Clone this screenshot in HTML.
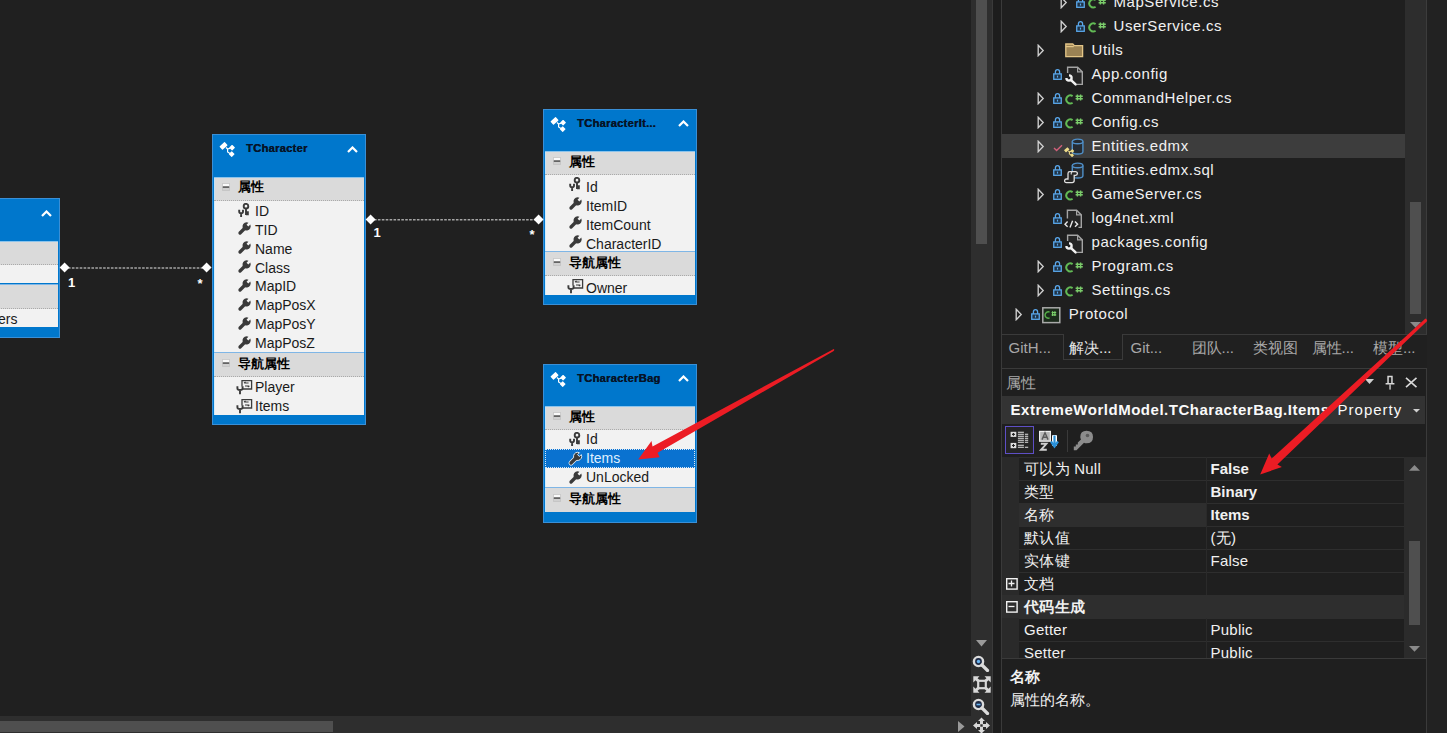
<!DOCTYPE html><html><head><meta charset="utf-8"><style>
*{margin:0;padding:0;box-sizing:border-box}
html,body{width:1447px;height:733px;overflow:hidden;background:#202020;font-family:"Liberation Sans", sans-serif}
.abs{position:absolute}
.ent{position:absolute;background:#0077cc;border:1px solid #3a8fd6;overflow:hidden}
.etitle{position:absolute;font-weight:bold;font-size:11.2px;color:#061428;white-space:nowrap;letter-spacing:0.25px;margin-top:1px;text-shadow:0.35px 0 0 #061428}
.sec{position:absolute;left:1px;height:24px;background:#dadada;border-bottom:1px dotted #aaaaaa;border-top:1px solid #8cc4ec;box-shadow:inset 1px 0 0 #c4e2f6}
.sec.empty{border-bottom:none}
.sec.nav{border-top:1px solid #7fb6e6}
.sect{position:absolute;top:1px;font-size:13px;line-height:22px;color:#000;font-weight:bold;white-space:nowrap;margin-left:1.5px}
.rows{position:absolute;left:1px;background:#f2f2f2;box-shadow:inset 1px 0 0 #d4ecfa}
.rowt{position:absolute;left:41px;margin-top:1.3px;font-size:14px;line-height:18.9px;color:#1a1a1a;white-space:nowrap}
.selrow{position:absolute;left:0;right:0;background:#0a72d0;outline:1px dotted #d8e8f8;outline-offset:-1px}
.selt{color:#dff0ff}
.dia{position:absolute;width:7.2px;height:7.2px;background:#fff;transform:rotate(45deg)}
.card{position:absolute;font-size:13px;font-weight:bold;color:#fff}
.tree{position:absolute;font-size:15px;letter-spacing:0.55px;color:#f1f1f1;white-space:nowrap;line-height:24px}
.tab{position:absolute;top:337.5px;font-size:15px;line-height:20px;color:#a8a8a8;white-space:nowrap}
.pg{position:absolute;font-size:15px;line-height:23px;color:#f1f1f1;white-space:nowrap;letter-spacing:0.25px}
</style></head><body><div class="abs" style="left:0;top:0;width:971px;height:716px;background:#202020"></div><svg class="abs" style="left:0;top:0" width="971" height="716"><path d="M68 268 H204 M374 219.8 H536" stroke="#a4a4a4" stroke-width="1.4" stroke-dasharray="2.6 1.3"/></svg><div class="ent" style="left:-94px;top:198px;width:154px;height:139.6px"><svg style="position:absolute;left:5.8px;top:6px" width="17" height="17" viewBox="0 0 17 17">
<g fill="#fff"><rect x="1" y="2.6" width="7" height="4.6" rx="0.6" transform="rotate(-42 4.5 4.9)"/>
<rect x="11" y="4.6" width="4.2" height="4.2" rx="0.5" transform="rotate(45 13.1 6.7)"/>
<rect x="10.6" y="11" width="4.2" height="4.2" rx="0.5" transform="rotate(45 12.7 13.1)"/></g>
<path d="M7 6.5 L8.6 8 L8.6 11 L11 12.6 M8.6 8 L11.4 7.2" stroke="#fff" stroke-width="1.2" fill="none"/></svg><div class="etitle" style="left:33px;top:6px">TUser</div><svg style="position:absolute;left:133.5px;top:10.5px" width="11" height="7" viewBox="0 0 11 7"><path d="M1 6 L5.5 1.5 L10 6" stroke="#fff" stroke-width="2.2" fill="none"/></svg><div class="sec" style="top:41.6px;width:150px"><svg style="position:absolute;left:8px;top:5.2px" width="8" height="8" viewBox="0 0 8 8"><rect x="0" y="0" width="8" height="8" rx="0.8" fill="#c4c4c4"/><rect x="0.8" y="0.8" width="6.4" height="3" fill="#fafafa"/><rect x="0.8" y="4.6" width="6.4" height="2.6" fill="#d0d0d0"/><rect x="0.8" y="3.4" width="6.4" height="1.3" fill="#3a3a3a"/></svg><span class="sect" style="left:22px;top:-1.3px">属性</span></div><div class="rows" style="top:65.6px;width:150px;height:18.9px"><svg style="position:absolute;left:24.2px;top:2.2px" width="12" height="15" viewBox="0 0 12 15">
<circle cx="8" cy="3.2" r="2.3" fill="none" stroke="#3a3a3a" stroke-width="1.9"/>
<path d="M8 5 L8 12 M8 9.3 L10.8 9.3 M8 11.2 L10.8 11.2" stroke="#3a3a3a" stroke-width="1.9" fill="none"/>
<path d="M1.2 6.8 L1.2 8.5 Q1.2 10.3 3.1 10.3 Q5 10.3 5 8.5 L5 6.8 M3.1 10 L3.1 14" stroke="#3a3a3a" stroke-width="1.9" fill="none"/></svg><div class="rowt" style="top:0.0px">ID</div></div><div class="sec nav" style="top:84.5px;width:150px;height:25px"><svg style="position:absolute;left:8px;top:6.5px" width="8" height="8" viewBox="0 0 8 8"><rect x="0" y="0" width="8" height="8" rx="0.8" fill="#c4c4c4"/><rect x="0.8" y="0.8" width="6.4" height="3" fill="#fafafa"/><rect x="0.8" y="4.6" width="6.4" height="2.6" fill="#d0d0d0"/><rect x="0.8" y="3.4" width="6.4" height="1.3" fill="#3a3a3a"/></svg><span class="sect" style="left:22px;top:0.3px">导航属性</span></div><div class="rows" style="top:109.5px;width:150px;height:18.9px"><svg style="position:absolute;left:22px;top:2.0px" width="17" height="16" viewBox="0 0 17 16">
<path d="M6 7.5 L6 1.6 L15.6 1.6 L15.6 10 L6.8 10" fill="none" stroke="#3c3c3c" stroke-width="1.3"/>
<path d="M8.3 4 L12.6 4 M8 4 L9.6 3.1 M9 7 L13.3 7 M13.4 7 L11.8 7.9" stroke="#3c3c3c" stroke-width="1.2" fill="none"/>
<path d="M1.4 7.3 L1.4 9.2 Q1.4 11 4 11 Q6.6 11 6.6 9.2 L6.6 7.3 M4 10.8 L4 15.2" stroke="#3c3c3c" stroke-width="1.9" fill="none"/></svg><div class="rowt" style="top:0.0px">Characters</div></div></div><div class="ent" style="left:212px;top:134px;width:154px;height:290.8px"><svg style="position:absolute;left:5.8px;top:6px" width="17" height="17" viewBox="0 0 17 17">
<g fill="#fff"><rect x="1" y="2.6" width="7" height="4.6" rx="0.6" transform="rotate(-42 4.5 4.9)"/>
<rect x="11" y="4.6" width="4.2" height="4.2" rx="0.5" transform="rotate(45 13.1 6.7)"/>
<rect x="10.6" y="11" width="4.2" height="4.2" rx="0.5" transform="rotate(45 12.7 13.1)"/></g>
<path d="M7 6.5 L8.6 8 L8.6 11 L11 12.6 M8.6 8 L11.4 7.2" stroke="#fff" stroke-width="1.2" fill="none"/></svg><div class="etitle" style="left:33px;top:6px">TCharacter</div><svg style="position:absolute;left:133.5px;top:10.5px" width="11" height="7" viewBox="0 0 11 7"><path d="M1 6 L5.5 1.5 L10 6" stroke="#fff" stroke-width="2.2" fill="none"/></svg><div class="sec" style="top:41.6px;width:150px"><svg style="position:absolute;left:8px;top:5.2px" width="8" height="8" viewBox="0 0 8 8"><rect x="0" y="0" width="8" height="8" rx="0.8" fill="#c4c4c4"/><rect x="0.8" y="0.8" width="6.4" height="3" fill="#fafafa"/><rect x="0.8" y="4.6" width="6.4" height="2.6" fill="#d0d0d0"/><rect x="0.8" y="3.4" width="6.4" height="1.3" fill="#3a3a3a"/></svg><span class="sect" style="left:22px;top:-1.3px">属性</span></div><div class="rows" style="top:65.6px;width:150px;height:151.2px"><svg style="position:absolute;left:24.2px;top:2.2px" width="12" height="15" viewBox="0 0 12 15">
<circle cx="8" cy="3.2" r="2.3" fill="none" stroke="#3a3a3a" stroke-width="1.9"/>
<path d="M8 5 L8 12 M8 9.3 L10.8 9.3 M8 11.2 L10.8 11.2" stroke="#3a3a3a" stroke-width="1.9" fill="none"/>
<path d="M1.2 6.8 L1.2 8.5 Q1.2 10.3 3.1 10.3 Q5 10.3 5 8.5 L5 6.8 M3.1 10 L3.1 14" stroke="#3a3a3a" stroke-width="1.9" fill="none"/></svg><div class="rowt" style="top:0.0px">ID</div><svg style="position:absolute;left:24px;top:21.7px;overflow:visible" width="13" height="13" viewBox="0 0 13 13">
<path d="M12.27 2.57 A4.1 4.1 0 1 1 10.43 0.73 L8.53 2.63 L10.37 4.47 Z" fill="#3a3a3a"/>
<path d="M7 6 L2 11" stroke="#3a3a3a" stroke-width="3.3" stroke-linecap="round"/></svg><div class="rowt" style="top:18.9px">TID</div><svg style="position:absolute;left:24px;top:40.599999999999994px;overflow:visible" width="13" height="13" viewBox="0 0 13 13">
<path d="M12.27 2.57 A4.1 4.1 0 1 1 10.43 0.73 L8.53 2.63 L10.37 4.47 Z" fill="#3a3a3a"/>
<path d="M7 6 L2 11" stroke="#3a3a3a" stroke-width="3.3" stroke-linecap="round"/></svg><div class="rowt" style="top:37.8px">Name</div><svg style="position:absolute;left:24px;top:59.49999999999999px;overflow:visible" width="13" height="13" viewBox="0 0 13 13">
<path d="M12.27 2.57 A4.1 4.1 0 1 1 10.43 0.73 L8.53 2.63 L10.37 4.47 Z" fill="#3a3a3a"/>
<path d="M7 6 L2 11" stroke="#3a3a3a" stroke-width="3.3" stroke-linecap="round"/></svg><div class="rowt" style="top:56.7px">Class</div><svg style="position:absolute;left:24px;top:78.39999999999999px;overflow:visible" width="13" height="13" viewBox="0 0 13 13">
<path d="M12.27 2.57 A4.1 4.1 0 1 1 10.43 0.73 L8.53 2.63 L10.37 4.47 Z" fill="#3a3a3a"/>
<path d="M7 6 L2 11" stroke="#3a3a3a" stroke-width="3.3" stroke-linecap="round"/></svg><div class="rowt" style="top:75.6px">MapID</div><svg style="position:absolute;left:24px;top:97.3px;overflow:visible" width="13" height="13" viewBox="0 0 13 13">
<path d="M12.27 2.57 A4.1 4.1 0 1 1 10.43 0.73 L8.53 2.63 L10.37 4.47 Z" fill="#3a3a3a"/>
<path d="M7 6 L2 11" stroke="#3a3a3a" stroke-width="3.3" stroke-linecap="round"/></svg><div class="rowt" style="top:94.5px">MapPosX</div><svg style="position:absolute;left:24px;top:116.19999999999999px;overflow:visible" width="13" height="13" viewBox="0 0 13 13">
<path d="M12.27 2.57 A4.1 4.1 0 1 1 10.43 0.73 L8.53 2.63 L10.37 4.47 Z" fill="#3a3a3a"/>
<path d="M7 6 L2 11" stroke="#3a3a3a" stroke-width="3.3" stroke-linecap="round"/></svg><div class="rowt" style="top:113.4px">MapPosY</div><svg style="position:absolute;left:24px;top:135.1px;overflow:visible" width="13" height="13" viewBox="0 0 13 13">
<path d="M12.27 2.57 A4.1 4.1 0 1 1 10.43 0.73 L8.53 2.63 L10.37 4.47 Z" fill="#3a3a3a"/>
<path d="M7 6 L2 11" stroke="#3a3a3a" stroke-width="3.3" stroke-linecap="round"/></svg><div class="rowt" style="top:132.3px">MapPosZ</div></div><div class="sec nav" style="top:216.8px;width:150px;height:25px"><svg style="position:absolute;left:8px;top:6.5px" width="8" height="8" viewBox="0 0 8 8"><rect x="0" y="0" width="8" height="8" rx="0.8" fill="#c4c4c4"/><rect x="0.8" y="0.8" width="6.4" height="3" fill="#fafafa"/><rect x="0.8" y="4.6" width="6.4" height="2.6" fill="#d0d0d0"/><rect x="0.8" y="3.4" width="6.4" height="1.3" fill="#3a3a3a"/></svg><span class="sect" style="left:22px;top:0.3px">导航属性</span></div><div class="rows" style="top:241.8px;width:150px;height:37.8px"><svg style="position:absolute;left:22px;top:2.0px" width="17" height="16" viewBox="0 0 17 16">
<path d="M6 7.5 L6 1.6 L15.6 1.6 L15.6 10 L6.8 10" fill="none" stroke="#3c3c3c" stroke-width="1.3"/>
<path d="M8.3 4 L12.6 4 M8 4 L9.6 3.1 M9 7 L13.3 7 M13.4 7 L11.8 7.9" stroke="#3c3c3c" stroke-width="1.2" fill="none"/>
<path d="M1.4 7.3 L1.4 9.2 Q1.4 11 4 11 Q6.6 11 6.6 9.2 L6.6 7.3 M4 10.8 L4 15.2" stroke="#3c3c3c" stroke-width="1.9" fill="none"/></svg><div class="rowt" style="top:0.0px">Player</div><svg style="position:absolute;left:22px;top:20.9px" width="17" height="16" viewBox="0 0 17 16">
<path d="M6 7.5 L6 1.6 L15.6 1.6 L15.6 10 L6.8 10" fill="none" stroke="#3c3c3c" stroke-width="1.3"/>
<path d="M8.3 4 L12.6 4 M8 4 L9.6 3.1 M9 7 L13.3 7 M13.4 7 L11.8 7.9" stroke="#3c3c3c" stroke-width="1.2" fill="none"/>
<path d="M1.4 7.3 L1.4 9.2 Q1.4 11 4 11 Q6.6 11 6.6 9.2 L6.6 7.3 M4 10.8 L4 15.2" stroke="#3c3c3c" stroke-width="1.9" fill="none"/></svg><div class="rowt" style="top:18.9px">Items</div></div></div><div class="ent" style="left:543px;top:108.5px;width:154px;height:196.3px"><svg style="position:absolute;left:5.8px;top:6px" width="17" height="17" viewBox="0 0 17 17">
<g fill="#fff"><rect x="1" y="2.6" width="7" height="4.6" rx="0.6" transform="rotate(-42 4.5 4.9)"/>
<rect x="11" y="4.6" width="4.2" height="4.2" rx="0.5" transform="rotate(45 13.1 6.7)"/>
<rect x="10.6" y="11" width="4.2" height="4.2" rx="0.5" transform="rotate(45 12.7 13.1)"/></g>
<path d="M7 6.5 L8.6 8 L8.6 11 L11 12.6 M8.6 8 L11.4 7.2" stroke="#fff" stroke-width="1.2" fill="none"/></svg><div class="etitle" style="left:33px;top:6px">TCharacterIt...</div><svg style="position:absolute;left:133.5px;top:10.5px" width="11" height="7" viewBox="0 0 11 7"><path d="M1 6 L5.5 1.5 L10 6" stroke="#fff" stroke-width="2.2" fill="none"/></svg><div class="sec" style="top:41.6px;width:150px"><svg style="position:absolute;left:8px;top:5.2px" width="8" height="8" viewBox="0 0 8 8"><rect x="0" y="0" width="8" height="8" rx="0.8" fill="#c4c4c4"/><rect x="0.8" y="0.8" width="6.4" height="3" fill="#fafafa"/><rect x="0.8" y="4.6" width="6.4" height="2.6" fill="#d0d0d0"/><rect x="0.8" y="3.4" width="6.4" height="1.3" fill="#3a3a3a"/></svg><span class="sect" style="left:22px;top:-1.3px">属性</span></div><div class="rows" style="top:65.6px;width:150px;height:75.6px"><svg style="position:absolute;left:24.2px;top:2.2px" width="12" height="15" viewBox="0 0 12 15">
<circle cx="8" cy="3.2" r="2.3" fill="none" stroke="#3a3a3a" stroke-width="1.9"/>
<path d="M8 5 L8 12 M8 9.3 L10.8 9.3 M8 11.2 L10.8 11.2" stroke="#3a3a3a" stroke-width="1.9" fill="none"/>
<path d="M1.2 6.8 L1.2 8.5 Q1.2 10.3 3.1 10.3 Q5 10.3 5 8.5 L5 6.8 M3.1 10 L3.1 14" stroke="#3a3a3a" stroke-width="1.9" fill="none"/></svg><div class="rowt" style="top:1.6px">Id</div><svg style="position:absolute;left:24px;top:21.7px;overflow:visible" width="13" height="13" viewBox="0 0 13 13">
<path d="M12.27 2.57 A4.1 4.1 0 1 1 10.43 0.73 L8.53 2.63 L10.37 4.47 Z" fill="#3a3a3a"/>
<path d="M7 6 L2 11" stroke="#3a3a3a" stroke-width="3.3" stroke-linecap="round"/></svg><div class="rowt" style="top:20.5px">ItemID</div><svg style="position:absolute;left:24px;top:40.599999999999994px;overflow:visible" width="13" height="13" viewBox="0 0 13 13">
<path d="M12.27 2.57 A4.1 4.1 0 1 1 10.43 0.73 L8.53 2.63 L10.37 4.47 Z" fill="#3a3a3a"/>
<path d="M7 6 L2 11" stroke="#3a3a3a" stroke-width="3.3" stroke-linecap="round"/></svg><div class="rowt" style="top:39.4px">ItemCount</div><svg style="position:absolute;left:24px;top:59.49999999999999px;overflow:visible" width="13" height="13" viewBox="0 0 13 13">
<path d="M12.27 2.57 A4.1 4.1 0 1 1 10.43 0.73 L8.53 2.63 L10.37 4.47 Z" fill="#3a3a3a"/>
<path d="M7 6 L2 11" stroke="#3a3a3a" stroke-width="3.3" stroke-linecap="round"/></svg><div class="rowt" style="top:58.3px">CharacterID</div></div><div class="sec nav" style="top:141.2px;width:150px;height:25px"><svg style="position:absolute;left:8px;top:6.5px" width="8" height="8" viewBox="0 0 8 8"><rect x="0" y="0" width="8" height="8" rx="0.8" fill="#c4c4c4"/><rect x="0.8" y="0.8" width="6.4" height="3" fill="#fafafa"/><rect x="0.8" y="4.6" width="6.4" height="2.6" fill="#d0d0d0"/><rect x="0.8" y="3.4" width="6.4" height="1.3" fill="#3a3a3a"/></svg><span class="sect" style="left:22px;top:0.3px">导航属性</span></div><div class="rows" style="top:166.2px;width:150px;height:18.9px"><svg style="position:absolute;left:22px;top:2.0px" width="17" height="16" viewBox="0 0 17 16">
<path d="M6 7.5 L6 1.6 L15.6 1.6 L15.6 10 L6.8 10" fill="none" stroke="#3c3c3c" stroke-width="1.3"/>
<path d="M8.3 4 L12.6 4 M8 4 L9.6 3.1 M9 7 L13.3 7 M13.4 7 L11.8 7.9" stroke="#3c3c3c" stroke-width="1.2" fill="none"/>
<path d="M1.4 7.3 L1.4 9.2 Q1.4 11 4 11 Q6.6 11 6.6 9.2 L6.6 7.3 M4 10.8 L4 15.2" stroke="#3c3c3c" stroke-width="1.9" fill="none"/></svg><div class="rowt" style="top:1.6px">Owner</div></div></div><div class="ent" style="left:543px;top:363.5px;width:154px;height:159.2px"><svg style="position:absolute;left:5.8px;top:6px" width="17" height="17" viewBox="0 0 17 17">
<g fill="#fff"><rect x="1" y="2.6" width="7" height="4.6" rx="0.6" transform="rotate(-42 4.5 4.9)"/>
<rect x="11" y="4.6" width="4.2" height="4.2" rx="0.5" transform="rotate(45 13.1 6.7)"/>
<rect x="10.6" y="11" width="4.2" height="4.2" rx="0.5" transform="rotate(45 12.7 13.1)"/></g>
<path d="M7 6.5 L8.6 8 L8.6 11 L11 12.6 M8.6 8 L11.4 7.2" stroke="#fff" stroke-width="1.2" fill="none"/></svg><div class="etitle" style="left:33px;top:6px">TCharacterBag</div><svg style="position:absolute;left:133.5px;top:10.5px" width="11" height="7" viewBox="0 0 11 7"><path d="M1 6 L5.5 1.5 L10 6" stroke="#fff" stroke-width="2.2" fill="none"/></svg><div class="sec" style="top:41.6px;width:150px"><svg style="position:absolute;left:8px;top:5.2px" width="8" height="8" viewBox="0 0 8 8"><rect x="0" y="0" width="8" height="8" rx="0.8" fill="#c4c4c4"/><rect x="0.8" y="0.8" width="6.4" height="3" fill="#fafafa"/><rect x="0.8" y="4.6" width="6.4" height="2.6" fill="#d0d0d0"/><rect x="0.8" y="3.4" width="6.4" height="1.3" fill="#3a3a3a"/></svg><span class="sect" style="left:22px;top:-1.3px">属性</span></div><div class="rows" style="top:65.6px;width:150px;height:56.7px"><svg style="position:absolute;left:24.2px;top:2.2px" width="12" height="15" viewBox="0 0 12 15">
<circle cx="8" cy="3.2" r="2.3" fill="none" stroke="#3a3a3a" stroke-width="1.9"/>
<path d="M8 5 L8 12 M8 9.3 L10.8 9.3 M8 11.2 L10.8 11.2" stroke="#3a3a3a" stroke-width="1.9" fill="none"/>
<path d="M1.2 6.8 L1.2 8.5 Q1.2 10.3 3.1 10.3 Q5 10.3 5 8.5 L5 6.8 M3.1 10 L3.1 14" stroke="#3a3a3a" stroke-width="1.9" fill="none"/></svg><div class="rowt" style="top:-1.3px">Id</div><div class="selrow" style="top:18.9px;height:18.9px"></div><svg style="position:absolute;left:24px;top:21.7px;overflow:visible" width="13" height="13" viewBox="0 0 13 13"><path d="M7 6 L2 11" stroke="#e8f4ff" stroke-width="4.8" stroke-linecap="round"/>
<path d="M12.27 2.57 A4.1 4.1 0 1 1 10.43 0.73 L8.53 2.63 L10.37 4.47 Z" fill="#3a3a3a" stroke="#e8f4ff" stroke-width="0.9"/>
<path d="M7 6 L2 11" stroke="#3a3a3a" stroke-width="3.3" stroke-linecap="round"/></svg><div class="rowt selt" style="top:17.6px">Items</div><svg style="position:absolute;left:24px;top:40.599999999999994px;overflow:visible" width="13" height="13" viewBox="0 0 13 13">
<path d="M12.27 2.57 A4.1 4.1 0 1 1 10.43 0.73 L8.53 2.63 L10.37 4.47 Z" fill="#3a3a3a"/>
<path d="M7 6 L2 11" stroke="#3a3a3a" stroke-width="3.3" stroke-linecap="round"/></svg><div class="rowt" style="top:36.5px">UnLocked</div></div><div class="sec nav empty" style="top:122.3px;width:150px;height:25px"><svg style="position:absolute;left:8px;top:6.5px" width="8" height="8" viewBox="0 0 8 8"><rect x="0" y="0" width="8" height="8" rx="0.8" fill="#c4c4c4"/><rect x="0.8" y="0.8" width="6.4" height="3" fill="#fafafa"/><rect x="0.8" y="4.6" width="6.4" height="2.6" fill="#d0d0d0"/><rect x="0.8" y="3.4" width="6.4" height="1.3" fill="#3a3a3a"/></svg><span class="sect" style="left:22px;top:0.3px">导航属性</span></div></div><div class="dia" style="left:61.4px;top:264.4px"></div><div class="dia" style="left:203.4px;top:264.4px"></div><div class="dia" style="left:367.4px;top:216.2px"></div><div class="dia" style="left:534.7px;top:216.2px"></div><div class="card" style="left:68px;top:275px">1</div><div class="card" style="left:197.5px;top:275.5px;font-size:13px">*</div><div class="card" style="left:373.5px;top:225px">1</div><div class="card" style="left:529.5px;top:226.5px;font-size:13px">*</div><div class="abs" style="left:971px;top:0;width:22px;height:733px;background:#2e2e2e;border-right:1px solid #3a3a3a"></div><div class="abs" style="left:976px;top:0;width:11px;height:244px;background:#4f4f4f"></div><div class="abs" style="left:0;top:716px;width:971px;height:17px;background:#2e2e2e"></div><div class="abs" style="left:0;top:721px;width:333px;height:11px;background:#4f4f4f"></div><svg class="abs" style="left:976px;top:639.5px" width="11" height="7"><path d="M0 0 L11 0 L5.5 6.5Z" fill="#9a9a9a"/></svg><svg class="abs" style="left:957.5px;top:721px" width="7" height="11"><path d="M0 0 L6.5 5.5 L0 11Z" fill="#9a9a9a"/></svg><div class="abs" style="left:993px;top:0;width:8px;height:733px;background:#1d1d1d"></div><div class="abs" style="left:1001px;top:0;width:1px;height:733px;background:#3a3a3a"></div><div class="abs" style="left:1427px;top:0;width:20px;height:733px;background:#222222"></div><div class="abs" style="left:1002px;top:0;width:425px;height:335px;background:#1f1f1f;border-bottom:1px solid #3a3a3a;border-right:1px solid #3a3a3a"></div><div class="abs" style="left:1002px;top:134px;width:403px;height:24px;background:#3d3d3d"></div><div class="abs" style="left:1405px;top:0;width:22px;height:335px;background:#2d2d2d;border-right:1px solid #3c3c3c;border-bottom:1px solid #3a3a3a"></div><div class="abs" style="left:1410px;top:0;width:11px;height:314px;background:#4f4f4f"></div><div class="abs" style="left:1410px;top:0;width:11px;height:202px;background:#2d2d2d"></div><svg class="abs" style="left:1410px;top:322px" width="11" height="6"><path d="M0 0 L11 0 L5.5 5.8Z" fill="#8a8a8a"/></svg><svg class="abs" style="left:1059.9px;top:-4.3px" width="8" height="13" viewBox="0 0 8 13"><path d="M1.2 1.3 L6.2 6.5 L1.2 11.7 Z" fill="none" stroke="#d0d0d0" stroke-width="1.35" stroke-linejoin="miter"/></svg><svg class="abs" style="left:1075.5px;top:-2.8px" width="9" height="11" viewBox="0 0 9 11"><path d="M2.4 5 L2.4 3 Q2.4 0.7 4.5 0.7 Q6.6 0.7 6.6 3 L6.6 5" fill="none" stroke="#5aa8ec" stroke-width="1.3"/><rect x="0.75" y="4.9" width="7.5" height="5.4" fill="#1f3347" stroke="#5aa8ec" stroke-width="1.3"/><rect x="3.9" y="6.6" width="1.2" height="2" fill="#5aa8ec"/></svg><svg class="abs" style="left:1087.8px;top:-2.4000000000000004px" width="20" height="12" viewBox="0 0 20 12"><path d="M7.6 2.1 A4 4 0 1 0 7.6 8.7" fill="none" stroke="#62ba55" stroke-width="2"/><path d="M12.4 0.4 V6.6 M15.6 0.4 V6.6 M10.6 2.2 H17.8 M10.6 4.8 H17.8" stroke="#7acb6a" stroke-width="1.4"/></svg><div class="tree" style="left:1113.5px;top:-10px">MapService.cs</div><svg class="abs" style="left:1059.9px;top:19.7px" width="8" height="13" viewBox="0 0 8 13"><path d="M1.2 1.3 L6.2 6.5 L1.2 11.7 Z" fill="none" stroke="#d0d0d0" stroke-width="1.35" stroke-linejoin="miter"/></svg><svg class="abs" style="left:1075.5px;top:21.2px" width="9" height="11" viewBox="0 0 9 11"><path d="M2.4 5 L2.4 3 Q2.4 0.7 4.5 0.7 Q6.6 0.7 6.6 3 L6.6 5" fill="none" stroke="#5aa8ec" stroke-width="1.3"/><rect x="0.75" y="4.9" width="7.5" height="5.4" fill="#1f3347" stroke="#5aa8ec" stroke-width="1.3"/><rect x="3.9" y="6.6" width="1.2" height="2" fill="#5aa8ec"/></svg><svg class="abs" style="left:1087.8px;top:21.6px" width="20" height="12" viewBox="0 0 20 12"><path d="M7.6 2.1 A4 4 0 1 0 7.6 8.7" fill="none" stroke="#62ba55" stroke-width="2"/><path d="M12.4 0.4 V6.6 M15.6 0.4 V6.6 M10.6 2.2 H17.8 M10.6 4.8 H17.8" stroke="#7acb6a" stroke-width="1.4"/></svg><div class="tree" style="left:1113.5px;top:14px">UserService.cs</div><svg class="abs" style="left:1037.2px;top:43.7px" width="8" height="13" viewBox="0 0 8 13"><path d="M1.2 1.3 L6.2 6.5 L1.2 11.7 Z" fill="none" stroke="#d0d0d0" stroke-width="1.35" stroke-linejoin="miter"/></svg><svg class="abs" style="left:1065.0px;top:43.2px" width="19" height="15" viewBox="0 0 19 15"><path d="M0.8 1 L7.8 1 L9.4 2.6 L17.6 2.6 L17.6 13.6 L0.8 13.6 Z" fill="#9a8254" stroke="#e3c587" stroke-width="1.3"/><path d="M0.8 3.6 H8.8" stroke="#e3c587" stroke-width="1.2"/></svg><div class="tree" style="left:1091.5px;top:38px">Utils</div><svg class="abs" style="left:1052.8px;top:69.2px" width="9" height="11" viewBox="0 0 9 11"><path d="M2.4 5 L2.4 3 Q2.4 0.7 4.5 0.7 Q6.6 0.7 6.6 3 L6.6 5" fill="none" stroke="#5aa8ec" stroke-width="1.3"/><rect x="0.75" y="4.9" width="7.5" height="5.4" fill="#1f3347" stroke="#5aa8ec" stroke-width="1.3"/><rect x="3.9" y="6.6" width="1.2" height="2" fill="#5aa8ec"/></svg><svg class="abs" style="left:1064.5px;top:65.5px" width="19" height="20" viewBox="0 0 19 20"><path d="M2.6 7 L2.6 1.2 L12.6 1.2 L17.3 5.9 L17.3 18.4 L12 18.4" fill="#262626" stroke="#a4a4a4" stroke-width="1.4"/><path d="M12.6 1.2 L12.6 5.9 L17.3 5.9" fill="none" stroke="#a4a4a4" stroke-width="1.2"/><path d="M4 9.4 A2.6 2.6 0 1 1 1.4 12" fill="none" stroke="#f2f2f2" stroke-width="2.3"/><path d="M5.8 13.8 L10.6 18.4" stroke="#f2f2f2" stroke-width="2.5" stroke-linecap="round"/></svg><div class="tree" style="left:1091.5px;top:62px">App.config</div><svg class="abs" style="left:1037.2px;top:91.7px" width="8" height="13" viewBox="0 0 8 13"><path d="M1.2 1.3 L6.2 6.5 L1.2 11.7 Z" fill="none" stroke="#d0d0d0" stroke-width="1.35" stroke-linejoin="miter"/></svg><svg class="abs" style="left:1052.8px;top:93.2px" width="9" height="11" viewBox="0 0 9 11"><path d="M2.4 5 L2.4 3 Q2.4 0.7 4.5 0.7 Q6.6 0.7 6.6 3 L6.6 5" fill="none" stroke="#5aa8ec" stroke-width="1.3"/><rect x="0.75" y="4.9" width="7.5" height="5.4" fill="#1f3347" stroke="#5aa8ec" stroke-width="1.3"/><rect x="3.9" y="6.6" width="1.2" height="2" fill="#5aa8ec"/></svg><svg class="abs" style="left:1065.1px;top:93.6px" width="20" height="12" viewBox="0 0 20 12"><path d="M7.6 2.1 A4 4 0 1 0 7.6 8.7" fill="none" stroke="#62ba55" stroke-width="2"/><path d="M12.4 0.4 V6.6 M15.6 0.4 V6.6 M10.6 2.2 H17.8 M10.6 4.8 H17.8" stroke="#7acb6a" stroke-width="1.4"/></svg><div class="tree" style="left:1091.5px;top:86px">CommandHelper.cs</div><svg class="abs" style="left:1037.2px;top:115.7px" width="8" height="13" viewBox="0 0 8 13"><path d="M1.2 1.3 L6.2 6.5 L1.2 11.7 Z" fill="none" stroke="#d0d0d0" stroke-width="1.35" stroke-linejoin="miter"/></svg><svg class="abs" style="left:1052.8px;top:117.2px" width="9" height="11" viewBox="0 0 9 11"><path d="M2.4 5 L2.4 3 Q2.4 0.7 4.5 0.7 Q6.6 0.7 6.6 3 L6.6 5" fill="none" stroke="#5aa8ec" stroke-width="1.3"/><rect x="0.75" y="4.9" width="7.5" height="5.4" fill="#1f3347" stroke="#5aa8ec" stroke-width="1.3"/><rect x="3.9" y="6.6" width="1.2" height="2" fill="#5aa8ec"/></svg><svg class="abs" style="left:1065.1px;top:117.6px" width="20" height="12" viewBox="0 0 20 12"><path d="M7.6 2.1 A4 4 0 1 0 7.6 8.7" fill="none" stroke="#62ba55" stroke-width="2"/><path d="M12.4 0.4 V6.6 M15.6 0.4 V6.6 M10.6 2.2 H17.8 M10.6 4.8 H17.8" stroke="#7acb6a" stroke-width="1.4"/></svg><div class="tree" style="left:1091.5px;top:110px">Config.cs</div><svg class="abs" style="left:1037.2px;top:139.7px" width="8" height="13" viewBox="0 0 8 13"><path d="M1.2 1.3 L6.2 6.5 L1.2 11.7 Z" fill="none" stroke="#d0d0d0" stroke-width="1.35" stroke-linejoin="miter"/></svg><svg class="abs" style="left:1052.5px;top:144px" width="10" height="8" viewBox="0 0 10 8"><path d="M1 4 L3.6 6.6 L9 1.2" fill="none" stroke="#d0607a" stroke-width="1.4"/></svg><svg class="abs" style="left:1064.0px;top:137.5px" width="22" height="22" viewBox="0 0 22 22"><path d="M8.3 3.6 L8.3 13.8 Q8.3 16 13.6 16 Q18.9 16 18.9 13.8 L18.9 3.6" fill="#262c33" stroke="#4f8fc8" stroke-width="1.4"/><ellipse cx="13.6" cy="3.4" rx="5.3" ry="2.3" fill="#262c33" stroke="#4f8fc8" stroke-width="1.4"/><g transform="translate(-0.3 8.6) scale(0.66)"><g fill="#eedc8a"><rect x="1" y="2.6" width="7" height="4.6" rx="0.6" transform="rotate(-42 4.5 4.9)"/><rect x="11" y="4.6" width="4.2" height="4.2" rx="0.5" transform="rotate(45 13.1 6.7)"/><rect x="10.6" y="11" width="4.2" height="4.2" rx="0.5" transform="rotate(45 12.7 13.1)"/></g><path d="M7 6.5 L8.6 8 L8.6 11 L11 12.6 M8.6 8 L11.4 7.2" stroke="#eedc8a" stroke-width="1.6" fill="none"/></g></svg><div class="tree" style="left:1091.5px;top:134px">Entities.edmx</div><svg class="abs" style="left:1052.8px;top:165.2px" width="9" height="11" viewBox="0 0 9 11"><path d="M2.4 5 L2.4 3 Q2.4 0.7 4.5 0.7 Q6.6 0.7 6.6 3 L6.6 5" fill="none" stroke="#5aa8ec" stroke-width="1.3"/><rect x="0.75" y="4.9" width="7.5" height="5.4" fill="#1f3347" stroke="#5aa8ec" stroke-width="1.3"/><rect x="3.9" y="6.6" width="1.2" height="2" fill="#5aa8ec"/></svg><svg class="abs" style="left:1064.0px;top:161.5px" width="22" height="22" viewBox="0 0 22 22"><path d="M8.3 3.6 L8.3 13.8 Q8.3 16 13.6 16 Q18.9 16 18.9 13.8 L18.9 3.6" fill="#262c33" stroke="#4f8fc8" stroke-width="1.4"/><ellipse cx="13.6" cy="3.4" rx="5.3" ry="2.3" fill="#262c33" stroke="#4f8fc8" stroke-width="1.4"/><path d="M5.8 9.6 L11.4 9.6 Q13.4 9.6 13.4 11.6 Q13.4 13.4 11.6 13.4 L10.2 13.4 L10.2 18.6 Q10.2 20.6 8.2 20.6 L2.4 20.6 Q0.6 20.6 0.6 18.8 Q0.6 17 2.4 17 L4 17 L4 11.4 Q4 9.6 5.8 9.6Z" fill="#262626" stroke="#e0e0e0" stroke-width="1.3"/><path d="M8 9.8 Q6.6 11 7.4 12.6" stroke="#e0e0e0" stroke-width="1.1" fill="none"/></svg><div class="tree" style="left:1091.5px;top:158px">Entities.edmx.sql</div><svg class="abs" style="left:1037.2px;top:187.7px" width="8" height="13" viewBox="0 0 8 13"><path d="M1.2 1.3 L6.2 6.5 L1.2 11.7 Z" fill="none" stroke="#d0d0d0" stroke-width="1.35" stroke-linejoin="miter"/></svg><svg class="abs" style="left:1052.8px;top:189.2px" width="9" height="11" viewBox="0 0 9 11"><path d="M2.4 5 L2.4 3 Q2.4 0.7 4.5 0.7 Q6.6 0.7 6.6 3 L6.6 5" fill="none" stroke="#5aa8ec" stroke-width="1.3"/><rect x="0.75" y="4.9" width="7.5" height="5.4" fill="#1f3347" stroke="#5aa8ec" stroke-width="1.3"/><rect x="3.9" y="6.6" width="1.2" height="2" fill="#5aa8ec"/></svg><svg class="abs" style="left:1065.1px;top:189.6px" width="20" height="12" viewBox="0 0 20 12"><path d="M7.6 2.1 A4 4 0 1 0 7.6 8.7" fill="none" stroke="#62ba55" stroke-width="2"/><path d="M12.4 0.4 V6.6 M15.6 0.4 V6.6 M10.6 2.2 H17.8 M10.6 4.8 H17.8" stroke="#7acb6a" stroke-width="1.4"/></svg><div class="tree" style="left:1091.5px;top:182px">GameServer.cs</div><svg class="abs" style="left:1052.8px;top:213.2px" width="9" height="11" viewBox="0 0 9 11"><path d="M2.4 5 L2.4 3 Q2.4 0.7 4.5 0.7 Q6.6 0.7 6.6 3 L6.6 5" fill="none" stroke="#5aa8ec" stroke-width="1.3"/><rect x="0.75" y="4.9" width="7.5" height="5.4" fill="#1f3347" stroke="#5aa8ec" stroke-width="1.3"/><rect x="3.9" y="6.6" width="1.2" height="2" fill="#5aa8ec"/></svg><svg class="abs" style="left:1064.0px;top:208.5px" width="19" height="20" viewBox="0 0 19 20"><path d="M3.4 9.5 L3.4 1.2 L12.6 1.2 L17.3 5.9 L17.3 18.4 L14.5 18.4" fill="#262626" stroke="#a4a4a4" stroke-width="1.4"/><path d="M12.6 1.2 L12.6 5.9 L17.3 5.9" fill="none" stroke="#a4a4a4" stroke-width="1.2"/><path d="M3.6 12.6 L1 15.2 L3.6 17.8 M11 12.6 L13.6 15.2 L11 17.8 M8.6 11.8 L6 18.6" fill="none" stroke="#e8e8e8" stroke-width="1.4"/></svg><div class="tree" style="left:1091.5px;top:206px">log4net.xml</div><svg class="abs" style="left:1052.8px;top:237.2px" width="9" height="11" viewBox="0 0 9 11"><path d="M2.4 5 L2.4 3 Q2.4 0.7 4.5 0.7 Q6.6 0.7 6.6 3 L6.6 5" fill="none" stroke="#5aa8ec" stroke-width="1.3"/><rect x="0.75" y="4.9" width="7.5" height="5.4" fill="#1f3347" stroke="#5aa8ec" stroke-width="1.3"/><rect x="3.9" y="6.6" width="1.2" height="2" fill="#5aa8ec"/></svg><svg class="abs" style="left:1064.5px;top:233.5px" width="19" height="20" viewBox="0 0 19 20"><path d="M2.6 7 L2.6 1.2 L12.6 1.2 L17.3 5.9 L17.3 18.4 L12 18.4" fill="#262626" stroke="#a4a4a4" stroke-width="1.4"/><path d="M12.6 1.2 L12.6 5.9 L17.3 5.9" fill="none" stroke="#a4a4a4" stroke-width="1.2"/><path d="M4 9.4 A2.6 2.6 0 1 1 1.4 12" fill="none" stroke="#f2f2f2" stroke-width="2.3"/><path d="M5.8 13.8 L10.6 18.4" stroke="#f2f2f2" stroke-width="2.5" stroke-linecap="round"/></svg><div class="tree" style="left:1091.5px;top:230px">packages.config</div><svg class="abs" style="left:1037.2px;top:259.7px" width="8" height="13" viewBox="0 0 8 13"><path d="M1.2 1.3 L6.2 6.5 L1.2 11.7 Z" fill="none" stroke="#d0d0d0" stroke-width="1.35" stroke-linejoin="miter"/></svg><svg class="abs" style="left:1052.8px;top:261.2px" width="9" height="11" viewBox="0 0 9 11"><path d="M2.4 5 L2.4 3 Q2.4 0.7 4.5 0.7 Q6.6 0.7 6.6 3 L6.6 5" fill="none" stroke="#5aa8ec" stroke-width="1.3"/><rect x="0.75" y="4.9" width="7.5" height="5.4" fill="#1f3347" stroke="#5aa8ec" stroke-width="1.3"/><rect x="3.9" y="6.6" width="1.2" height="2" fill="#5aa8ec"/></svg><svg class="abs" style="left:1065.1px;top:261.6px" width="20" height="12" viewBox="0 0 20 12"><path d="M7.6 2.1 A4 4 0 1 0 7.6 8.7" fill="none" stroke="#62ba55" stroke-width="2"/><path d="M12.4 0.4 V6.6 M15.6 0.4 V6.6 M10.6 2.2 H17.8 M10.6 4.8 H17.8" stroke="#7acb6a" stroke-width="1.4"/></svg><div class="tree" style="left:1091.5px;top:254px">Program.cs</div><svg class="abs" style="left:1037.2px;top:283.7px" width="8" height="13" viewBox="0 0 8 13"><path d="M1.2 1.3 L6.2 6.5 L1.2 11.7 Z" fill="none" stroke="#d0d0d0" stroke-width="1.35" stroke-linejoin="miter"/></svg><svg class="abs" style="left:1052.8px;top:285.2px" width="9" height="11" viewBox="0 0 9 11"><path d="M2.4 5 L2.4 3 Q2.4 0.7 4.5 0.7 Q6.6 0.7 6.6 3 L6.6 5" fill="none" stroke="#5aa8ec" stroke-width="1.3"/><rect x="0.75" y="4.9" width="7.5" height="5.4" fill="#1f3347" stroke="#5aa8ec" stroke-width="1.3"/><rect x="3.9" y="6.6" width="1.2" height="2" fill="#5aa8ec"/></svg><svg class="abs" style="left:1065.1px;top:285.6px" width="20" height="12" viewBox="0 0 20 12"><path d="M7.6 2.1 A4 4 0 1 0 7.6 8.7" fill="none" stroke="#62ba55" stroke-width="2"/><path d="M12.4 0.4 V6.6 M15.6 0.4 V6.6 M10.6 2.2 H17.8 M10.6 4.8 H17.8" stroke="#7acb6a" stroke-width="1.4"/></svg><div class="tree" style="left:1091.5px;top:278px">Settings.cs</div><svg class="abs" style="left:1015.3000000000001px;top:307.7px" width="8" height="13" viewBox="0 0 8 13"><path d="M1.2 1.3 L6.2 6.5 L1.2 11.7 Z" fill="none" stroke="#d0d0d0" stroke-width="1.35" stroke-linejoin="miter"/></svg><svg class="abs" style="left:1030.8999999999999px;top:309.2px" width="9" height="11" viewBox="0 0 9 11"><path d="M2.4 5 L2.4 3 Q2.4 0.7 4.5 0.7 Q6.6 0.7 6.6 3 L6.6 5" fill="none" stroke="#5aa8ec" stroke-width="1.3"/><rect x="0.75" y="4.9" width="7.5" height="5.4" fill="#1f3347" stroke="#5aa8ec" stroke-width="1.3"/><rect x="3.9" y="6.6" width="1.2" height="2" fill="#5aa8ec"/></svg><svg class="abs" style="left:1041.8px;top:307px" width="19" height="17" viewBox="0 0 19 17"><rect x="0.8" y="0.8" width="17" height="14.8" fill="#1b2a1b" stroke="#aaaaaa" stroke-width="1.5"/><path d="M7.6 5.1 A3.2 3.2 0 1 0 7.6 10.9" fill="none" stroke="#57b04a" stroke-width="1.4"/><path d="M10.6 4.2 V9 M12.9 4.2 V9 M9.6 5.5 H14.2 M9.6 7.8 H14.2" stroke="#7ad06a" stroke-width="1.2"/></svg><div class="tree" style="left:1068.8px;top:302px">Protocol</div><div class="abs" style="left:1062.5px;top:334px;width:60.5px;height:25.5px;background:#1f1f1f;border:1px solid #3a3a3a;border-top:none"></div><div class="tab" style="left:1008.5px;color:#a8a8a8">GitH...</div><div class="tab" style="left:1069px;color:#e8e8e8">解决...</div><div class="tab" style="left:1130.5px;color:#a8a8a8">Git...</div><div class="tab" style="left:1191.5px;color:#a8a8a8">团队...</div><div class="tab" style="left:1252.5px;color:#a8a8a8">类视图</div><div class="tab" style="left:1311.5px;color:#a8a8a8">属性...</div><div class="tab" style="left:1373px;color:#a8a8a8">模型...</div><div class="abs" style="left:1001px;top:368px;width:426px;height:365px;background:#1f1f1f;border:1px solid #3a3a3a;border-bottom:none"></div><div class="abs" style="left:1006px;top:372px;font-size:14.5px;line-height:22px;color:#a8a8a8">属性</div><svg class="abs" style="left:1365px;top:378.5px" width="9" height="6"><path d="M0 0 L9 0 L4.5 5Z" fill="#d0d0d0"/></svg><svg class="abs" style="left:1384.5px;top:374.5px" width="10" height="15" viewBox="0 0 10 15"><path d="M2.3 0.8 L7.7 0.8 L7.7 8 L9.4 8 L9.4 9.4 L0.6 9.4 L0.6 8 L2.3 8Z M3.8 2.2 L3.8 8 L6.2 8 L6.2 2.2Z" fill="#d8d8d8"/><rect x="4.4" y="9.4" width="1.3" height="5.2" fill="#d8d8d8"/></svg><svg class="abs" style="left:1405px;top:376.5px" width="12.5" height="11" viewBox="0 0 12.5 11"><path d="M1 0.8 L11.5 10.2 M11.5 0.8 L1 10.2" stroke="#d8d8d8" stroke-width="1.6"/></svg><div class="abs" style="left:1002px;top:396px;width:423px;height:28px;background:#333333"></div><div class="abs" style="left:1010.5px;top:398px;font-size:15px;line-height:24px;color:#fafafa;white-space:nowrap;letter-spacing:0.52px"><b>ExtremeWorldModel.TCharacterBag.Items</b><span style="letter-spacing:1px;margin-left:8px">Property</span></div><svg class="abs" style="left:1412.5px;top:409px" width="7" height="4"><path d="M0 0 L7 0 L3.5 3.5Z" fill="#d0d0d0"/></svg><div class="abs" style="left:1004.8px;top:426.2px;width:29.5px;height:28px;border:1.3px solid #5e4fc6;background:#252525"></div><svg class="abs" style="left:1009px;top:430px" width="21" height="21" viewBox="0 0 21 21"><rect x="1.6" y="1.8" width="5.7" height="5.1" fill="#e0e0e0"/><path d="M4.45 2.9 V5.8 M3 4.35 H5.9" stroke="#222" stroke-width="1.1"/><rect x="1.6" y="12.9" width="5.7" height="5.3" fill="#e0e0e0"/><path d="M4.45 14.1 V17 M3 15.55 H5.9" stroke="#222" stroke-width="1.1"/><path d="M8.9 2.3 H14.9 M8.9 4.3 H14.9 M8.9 6.3 H14.9 M8.9 8.3 H14.9 M8.9 10.3 H14.9 M8.9 12.3 H14.9 M8.9 15.3 H14.9 M8.9 17.3 H14.9 M15.9 4.3 H19.2 M15.9 6.3 H19.2 M15.9 8.3 H19.2 M15.9 10.3 H19.2 M15.9 12.3 H19.2 M15.9 17.3 H19.2" stroke="#e4e4e4" stroke-width="1.1"/></svg><svg class="abs" style="left:1037.5px;top:429.5px" width="22" height="21" viewBox="0 0 22 21"><rect x="1" y="0.8" width="12" height="11" fill="#f0f0f0"/><rect x="2.2" y="2" width="9.6" height="8.6" fill="#b8b8b8"/><path d="M4 9.6 L7 2.8 L10 9.6 M5.2 7.2 H8.8" stroke="#5a5a5a" stroke-width="1.4" fill="none"/><path d="M2.8 13.8 H8.4 L3 19.8 H8.8" stroke="#d0d0d0" stroke-width="1.9" fill="none"/><rect x="14" y="5" width="5" height="11" rx="1" fill="#fff"/><path d="M16.5 5.5 L16.5 15 M13 11.5 L16.5 16.5 L20 11.5" stroke="#2a90d8" stroke-width="2.2" fill="none"/></svg><div class="abs" style="left:1066.5px;top:430px;width:1px;height:22px;background:#3a3a3a"></div><svg class="abs" style="left:1073px;top:429.5px" width="21" height="21" viewBox="0 0 21 21"><path d="M13.5 0.8 Q20 0.8 20 7 Q20 13.3 13.5 13.3 Q12 13.3 11 12.7 L3.5 20.2 L0.8 20.2 L0.8 16.5 L2.8 16.5 L2.8 14.5 L4.8 14.5 L4.8 12.5 L8 9.5 Q7.3 8.3 7.3 7 Q7.3 0.8 13.5 0.8Z" fill="#8c8c8c"/><circle cx="14.5" cy="5.5" r="1.8" fill="#5a5a5a"/></svg><div class="abs" style="left:1002px;top:457px;width:403px;height:201px;background:#2a2a2a;overflow:hidden"><div class="abs" style="left:17px;top:0.0px;width:187px;height:23.1px;background:#1f1f1f;border-top:1px solid #2e2e2e"></div><div class="abs" style="left:205px;top:0.0px;width:198px;height:23.1px;background:#1f1f1f;border-top:1px solid #2e2e2e"></div><div class="pg" style="left:22px;top:0.0px">可以为 Null</div><div class="pg" style="left:208.5px;top:0.0px;font-weight:bold;letter-spacing:0">False</div><div class="abs" style="left:17px;top:23.1px;width:187px;height:23.1px;background:#1f1f1f;border-top:1px solid #2e2e2e"></div><div class="abs" style="left:205px;top:23.1px;width:198px;height:23.1px;background:#1f1f1f;border-top:1px solid #2e2e2e"></div><div class="pg" style="left:22px;top:23.1px">类型</div><div class="pg" style="left:208.5px;top:23.1px;font-weight:bold;letter-spacing:0">Binary</div><div class="abs" style="left:17px;top:46.1px;width:187px;height:23.1px;background:#2e2e2e;border-top:1px solid #2e2e2e"></div><div class="abs" style="left:205px;top:46.1px;width:198px;height:23.1px;background:#1f1f1f;border-top:1px solid #2e2e2e"></div><div class="pg" style="left:22px;top:46.1px">名称</div><div class="pg" style="left:208.5px;top:46.1px;font-weight:bold;letter-spacing:0">Items</div><div class="abs" style="left:17px;top:69.2px;width:187px;height:23.1px;background:#1f1f1f;border-top:1px solid #2e2e2e"></div><div class="abs" style="left:205px;top:69.2px;width:198px;height:23.1px;background:#1f1f1f;border-top:1px solid #2e2e2e"></div><div class="pg" style="left:22px;top:69.2px">默认值</div><div class="pg" style="left:208.5px;top:69.2px;">(无)</div><div class="abs" style="left:17px;top:92.2px;width:187px;height:23.1px;background:#1f1f1f;border-top:1px solid #2e2e2e"></div><div class="abs" style="left:205px;top:92.2px;width:198px;height:23.1px;background:#1f1f1f;border-top:1px solid #2e2e2e"></div><div class="pg" style="left:22px;top:92.2px">实体键</div><div class="pg" style="left:208.5px;top:92.2px;">False</div><div class="abs" style="left:17px;top:115.2px;width:187px;height:23.1px;background:#1f1f1f;border-top:1px solid #2e2e2e"></div><div class="abs" style="left:205px;top:115.2px;width:198px;height:23.1px;background:#1f1f1f;border-top:1px solid #2e2e2e"></div><div class="pg" style="left:22px;top:115.2px">文档</div><svg class="abs" style="left:3.5px;top:121.2px" width="12" height="12" viewBox="0 0 12 12"><rect x="0.7" y="0.7" width="10.4" height="10.4" fill="none" stroke="#f2f2f2" stroke-width="1.4"/><path d="M2.5 5.5 H8.5 M5.5 2.5 V8.5" stroke="#f2f2f2" stroke-width="1.3"/></svg><div class="abs" style="left:0;top:138.3px;width:403px;height:23px;background:#2e2e2e"></div><div class="pg" style="left:22px;top:138.3px;font-weight:bold">代码生成</div><svg class="abs" style="left:3.5px;top:144.3px" width="12" height="12" viewBox="0 0 12 12"><rect x="0.7" y="0.7" width="10.4" height="10.4" fill="none" stroke="#f2f2f2" stroke-width="1.4"/><path d="M2.5 5.5 H8.5" stroke="#f2f2f2" stroke-width="1.3"/></svg><div class="abs" style="left:17px;top:161.3px;width:187px;height:23.1px;background:#1f1f1f;border-top:1px solid #2e2e2e"></div><div class="abs" style="left:205px;top:161.3px;width:198px;height:23.1px;background:#1f1f1f;border-top:1px solid #2e2e2e"></div><div class="pg" style="left:22px;top:161.3px">Getter</div><div class="pg" style="left:208.5px;top:161.3px;">Public</div><div class="abs" style="left:17px;top:184.4px;width:187px;height:23.1px;background:#1f1f1f;border-top:1px solid #2e2e2e"></div><div class="abs" style="left:205px;top:184.4px;width:198px;height:23.1px;background:#1f1f1f;border-top:1px solid #2e2e2e"></div><div class="pg" style="left:22px;top:184.4px">Setter</div><div class="pg" style="left:208.5px;top:184.4px;">Public</div></div><div class="abs" style="left:1404px;top:457px;width:21.5px;height:201px;background:#2b2b2b"></div><div class="abs" style="left:1409px;top:541px;width:11px;height:84px;background:#4f4f4f"></div><svg class="abs" style="left:1409px;top:465px" width="11" height="6"><path d="M0 5.8 L11 5.8 L5.5 0Z" fill="#8a8a8a"/></svg><svg class="abs" style="left:1409px;top:645.5px" width="11" height="6"><path d="M0 0 L11 0 L5.5 5.8Z" fill="#8a8a8a"/></svg><div class="abs" style="left:1002px;top:658px;width:424px;height:75px;background:#1f1f1f;border-top:1px solid #3a3a3a"></div><div class="abs" style="left:1010px;top:666px;font-size:14.5px;line-height:22px;color:#f1f1f1;font-weight:bold">名称</div><div class="abs" style="left:1010px;top:688.5px;font-size:14.5px;line-height:22px;color:#f1f1f1">属性的名称。</div><svg class="abs" style="left:972px;top:655px" width="18" height="17" viewBox="0 0 18 17"><circle cx="6.5" cy="6.5" r="4.6" fill="#1e2a44" stroke="#dcdcdc" stroke-width="2.4"/><circle cx="6.5" cy="6.5" r="1.7" fill="#6ab4f0"/><path d="M10 10 L15.5 15.5" stroke="#dcdcdc" stroke-width="3.2" stroke-linecap="round"/></svg><svg class="abs" style="left:972.5px;top:676px" width="18" height="17" viewBox="0 0 18 17"><rect x="5.2" y="4.8" width="7.6" height="7.4" fill="none" stroke="#d8d8d8" stroke-width="2.2"/><path d="M0.3 0.3 H6.5 L4.6 2.2 L6.4 4 L4.3 6.1 L2.5 4.3 L0.3 6.5Z M17.7 0.3 H11.5 L13.4 2.2 L11.6 4 L13.7 6.1 L15.5 4.3 L17.7 6.5Z M0.3 16.7 H6.5 L4.6 14.8 L6.4 13 L4.3 10.9 L2.5 12.7 L0.3 10.5Z M17.7 16.7 H11.5 L13.4 14.8 L11.6 13 L13.7 10.9 L15.5 12.7 L17.7 10.5Z" fill="#d8d8d8"/></svg><svg class="abs" style="left:972px;top:697.5px" width="18" height="17" viewBox="0 0 18 17"><circle cx="6.5" cy="6.5" r="4.6" fill="#1e2a44" stroke="#dcdcdc" stroke-width="2.4"/><rect x="4.5" y="5.7" width="4" height="1.6" fill="#6ab4f0"/><path d="M10 10 L15.5 15.5" stroke="#dcdcdc" stroke-width="3.2" stroke-linecap="round"/></svg><svg class="abs" style="left:972px;top:716.5px" width="19" height="17" viewBox="0 0 19 17"><path d="M9.5 0.5 L13 4 L11 4 L11 7 L14 7 L14 5 L18 8.5 L14 12 L14 10 L11 10 L11 13 L13 13 L9.5 16.5 L6 13 L8 13 L8 10 L5 10 L5 12 L1 8.5 L5 5 L5 7 L8 7 L8 4 L6 4Z" fill="#d8d8d8"/><rect x="8.3" y="7.3" width="2.4" height="2.4" fill="#2e2e2e"/></svg><svg class="abs" style="left:0;top:0" width="1447" height="733" viewBox="0 0 1447 733"><path d="M833.8 348.9 Q835 350 833.3 351.3 L657.6 452.7 L659.7 457.2 L638.2 459.4 L651.5 441.1 L652.5 446.6 Z" fill="#ec1c24"/><path d="M1425.5 318.6 Q1427.6 320 1427 321.3 L1277.4 464.6 L1281.9 467 L1260.2 474.4 L1269.2 453.5 L1271.7 458.5 Z" fill="#ec1c24"/></svg></body></html>
